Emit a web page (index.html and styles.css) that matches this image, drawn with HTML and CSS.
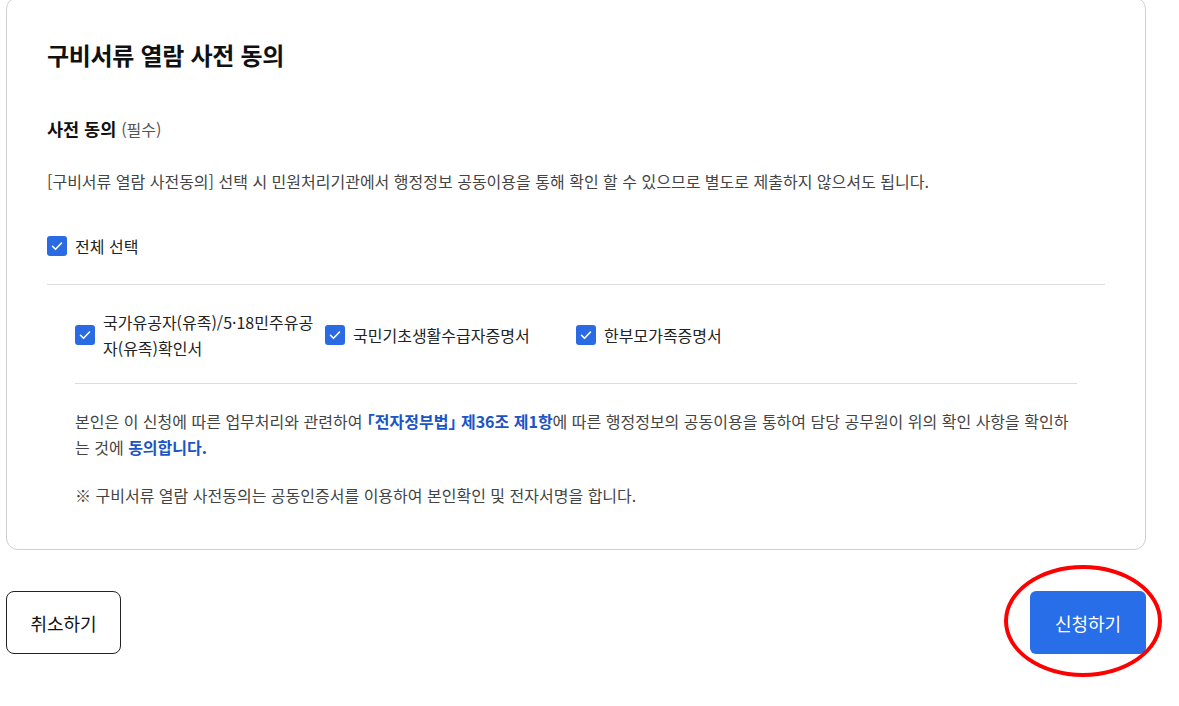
FILE: index.html
```html
<!DOCTYPE html>
<html lang="ko">
<head>
<meta charset="utf-8">
<title>구비서류 열람 사전 동의</title>
<link rel="stylesheet" href="styles.css">
</head>
<body>
<div class="page">
  <section class="card">
    <h2 class="card-title">구비서류 열람 사전 동의</h2>
    <h3 class="sec-title">사전 동의 <span class="req">(필수)</span></h3>
    <p class="desc">[구비서류 열람 사전동의] 선택 시 민원처리기관에서 행정정보 공동이용을 통해 확인 할 수 있으므로 별도로 제출하지 않으셔도 됩니다.</p>
    <label class="chk all">
      <span class="box"><svg viewBox="0 0 20 20" width="20" height="20"><path d="M5.5 10.3l3 3 6-6.3" fill="none" stroke="#fff" stroke-width="1.6" stroke-linecap="round" stroke-linejoin="round"/></svg></span>
      <span class="lbl">전체 선택</span>
    </label>
    <div class="inner">
      <div class="items">
        <label class="chk item">
          <span class="box"><svg viewBox="0 0 20 20" width="20" height="20"><path d="M5.5 10.3l3 3 6-6.3" fill="none" stroke="#fff" stroke-width="1.6" stroke-linecap="round" stroke-linejoin="round"/></svg></span>
          <span class="lbl">국가유공자(유족)/5·18민주유공자(유족)확인서</span>
        </label>
        <label class="chk item">
          <span class="box"><svg viewBox="0 0 20 20" width="20" height="20"><path d="M5.5 10.3l3 3 6-6.3" fill="none" stroke="#fff" stroke-width="1.6" stroke-linecap="round" stroke-linejoin="round"/></svg></span>
          <span class="lbl">국민기초생활수급자증명서</span>
        </label>
        <label class="chk item">
          <span class="box"><svg viewBox="0 0 20 20" width="20" height="20"><path d="M5.5 10.3l3 3 6-6.3" fill="none" stroke="#fff" stroke-width="1.6" stroke-linecap="round" stroke-linejoin="round"/></svg></span>
          <span class="lbl">한부모가족증명서</span>
        </label>
      </div>
      <p class="agree">본인은 이 신청에 따른 업무처리와 관련하여 <strong class="hl">「전자정부법」 제36조 제1항</strong>에 따른 행정정보의 공동이용을 통하여 담당 공무원이 위의 확인 사항을 확인하는 것에 <strong class="hl">동의합니다.</strong></p>
      <p class="note">※ 구비서류 열람 사전동의는 공동인증서를 이용하여 본인확인 및 전자서명을 합니다.</p>
    </div>
  </section>
  <div class="actions">
    <button class="btn btn-cancel" type="button">취소하기</button>
    <div class="submit-wrap">
      <button class="btn btn-submit" type="button">신청하기</button>
      <span class="mark"></span>
    </div>
  </div>
</div>
</body>
</html>
```
FILE: styles.css
```css
* { box-sizing: border-box; }
html, body { margin: 0; padding: 0; background: #fff; }
body {
  font-family: "Noto Sans CJK KR", "Noto Sans", sans-serif;
  color: #222;
  min-height: 706px;
}
.page {
  width: 1140px;
  margin: -3px 0 0 6px;
  padding-bottom: 60px;
}
.card {
  border: 1px solid #cfcfcf;
  border-radius: 12px;
  padding: 40px 40px 41px 40px;
}
.card-title {
  margin: 0;
  font-size: 24px;
  line-height: 34px;
  font-weight: 700;
  color: #111;
  letter-spacing: -0.3px;
}
.sec-title {
  margin: 44px 0 0;
  font-size: 17.5px;
  line-height: 26px;
  font-weight: 700;
  color: #111;
}
.req {
  font-size: 16px;
  font-weight: 400;
  color: #555;
}
.desc {
  margin: 27px 0 0;
  font-size: 16px;
  line-height: 24px;
  color: #444;
}
.chk {
  display: flex;
  align-items: center;
  gap: 8px;
  cursor: pointer;
}
.box {
  flex: none;
  width: 20px;
  height: 20px;
  border-radius: 3px;
  background: #2a6ae3;
  display: flex;
}
.lbl {
  font-size: 16px;
  line-height: 26px;
  color: #222;
}
.all {
  margin-top: 40px;
  padding-bottom: 25px;
  border-bottom: 1px solid #dcdcdc;
}
.inner {
  padding: 0 28px;
}
.items {
  display: grid;
  grid-template-columns: 250px 251px 250px;
  padding: 24px 0 22px;
  border-bottom: 1px solid #dcdcdc;
}
.item .lbl {
  max-width: 214px;
}
.agree {
  margin: 24px 0 0;
  font-size: 16px;
  line-height: 26px;
  color: #444;
}
.hl {
  color: #1b55c3;
  font-weight: 700;
  font-feature-settings: "halt";
}
.note {
  margin: 22px 0 0;
  font-size: 16px;
  line-height: 26px;
  color: #444;
}
.actions {
  display: flex;
  justify-content: space-between;
  align-items: center;
  margin-top: 41px;
}
.btn {
  font-family: inherit;
  font-size: 18px;
  height: 63px;
  padding: 0;
  cursor: pointer;
}
.btn-cancel {
  width: 115px;
  border: 1px solid #222;
  border-radius: 8px;
  background: #fff;
  color: #111;
}
.submit-wrap {
  position: relative;
}
.btn-submit {
  width: 116px;
  border: 0;
  border-radius: 6px;
  background: #276ee8;
  color: #fff;
  display: block;
}
.mark {
  position: absolute;
  left: -26px;
  top: -26px;
  width: 158px;
  height: 112px;
  border: 4px solid #f00;
  border-radius: 50%;
  pointer-events: none;
}
```
